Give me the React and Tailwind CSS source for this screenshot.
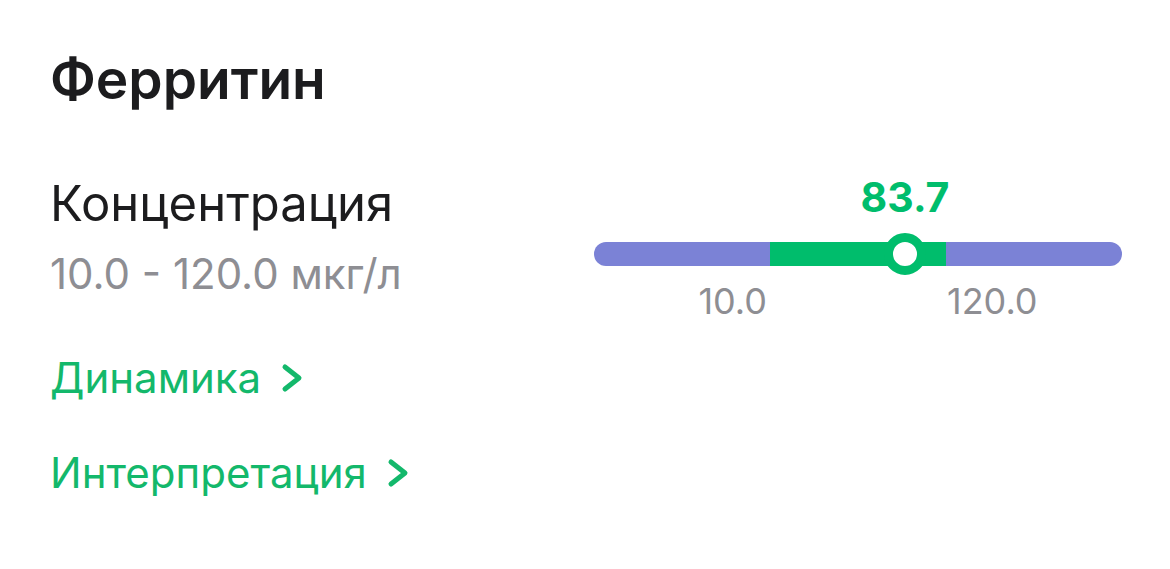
import React from "react";

function Chevron() {
  return (
    <svg width="22" height="30" viewBox="0 0 22 30" className="ml-[20px] shrink-0">
      <polyline
        points="4,4 18,15 4,26"
        fill="none"
        stroke="#13b86b"
        strokeWidth="5"
        strokeLinecap="round"
        strokeLinejoin="round"
      />
    </svg>
  );
}

function LinkRow({ label, className = "" }) {
  return (
    <div className={`flex items-center text-[42px] leading-[50px] text-[#13b86b] ${className}`}>
      <span>{label}</span>
      <Chevron />
    </div>
  );
}

function RangeBar({ value, knobLeft }) {
  return (
    <div className="w-[528px] flex flex-col">
      {/* value above the knob */}
      <div className="ml-[231px] w-[160px] text-center text-[41px] leading-[48px] font-bold text-[#00bd6c]">
        {value}
      </div>

      {/* bar */}
      <div className="relative mt-[21px] h-[24px] flex">
        <div className="w-[176px] h-full bg-[#7b82d6] rounded-l-full" />
        <div className="w-[176px] h-full bg-[#00bd6c]" />
        <div className="w-[176px] h-full bg-[#7b82d6] rounded-r-full" />
        <div
          className="absolute top-[-9px] w-[42px] h-[42px] rounded-full bg-white border-[9px] border-[#00bd6c]"
          style={{ left: knobLeft }}
        />
      </div>

      {/* norm bounds */}
      <div className="mt-[13px] grid grid-cols-3 text-[36px] leading-[44px] text-[#8e8e93]">
        <div className="text-right pr-[3px]">10.0</div>
        <div />
        <div className="text-left pl-[1px]">120.0</div>
      </div>
    </div>
  );
}

export default function App() {
  return (
    <div className="w-[1170px] h-[569px] bg-white pl-[50px] pt-[46px] font-['Inter','Noto_Sans',sans-serif] text-[#1c1c1e] overflow-hidden">
      <h1 className="text-[55px] leading-[66px] font-semibold">Ферритин</h1>

      <div className="mt-[61px] flex items-start justify-between pr-[48px]">
        {/* left column */}
        <div className="flex flex-col pt-[3px]">
          <div className="text-[49px] leading-[56px]">Концентрация</div>
          <div className="mt-[17px] text-[42px] leading-[50px] text-[#8e8e93]">10.0 - 120.0 мкг/л</div>
          <LinkRow label="Динамика" className="mt-[54px]" />
          <LinkRow label="Интерпретация" className="mt-[45px]" />
        </div>

        {/* right column */}
        <RangeBar value="83.7" knobLeft={290} />
      </div>
    </div>
  );
}
